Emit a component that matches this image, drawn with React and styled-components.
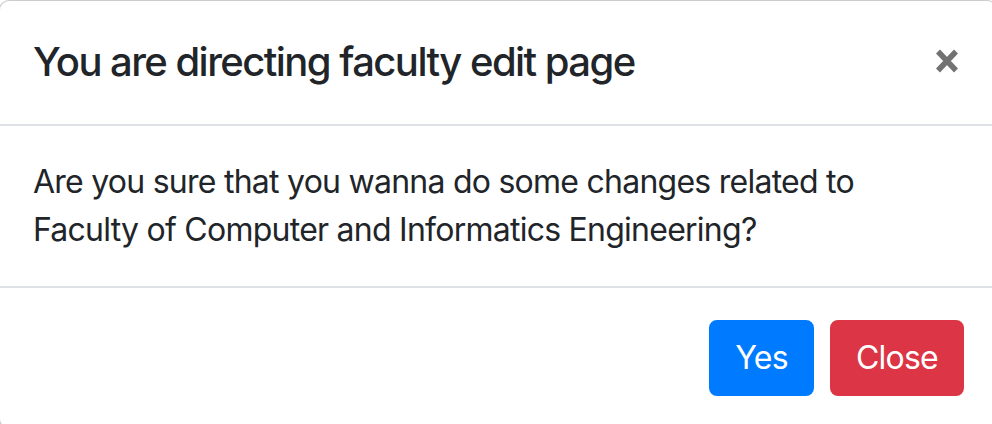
import styled, { createGlobalStyle } from 'styled-components'

const GlobalStyle = createGlobalStyle`
    html, body {
        margin: 0;
        padding: 0;
        background: #fff;
        overflow: hidden;
    }
    body {
        font-family: Inter, "Liberation Sans", Arial, sans-serif;
        color: #212529;
    }
`

export default function App() {
    return (
        <>
            <GlobalStyle />
            <Modal>
                <Header>
                    <Title>You are directing faculty edit page</Title>
                    <CloseX aria-label='Close'>
                        <svg width='24' height='26' viewBox='0 0 24 26'>
                            <path d='M3 3.5 L21 22.5 M21 3.5 L3 22.5' stroke='#000' strokeWidth='5.5' strokeLinecap='butt' />
                        </svg>
                    </CloseX>
                </Header>
                <Body>
                    Are you sure that you wanna do some changes related to<br />
                    Faculty of Computer and Informatics Engineering?
                </Body>
                <Footer>
                    <Button variant='primary'>Yes</Button>
                    <Button variant='danger'>Close</Button>
                </Footer>
            </Modal>
        </>
    )
}

const Modal = styled.div`
    box-sizing: border-box;
    width: 998px;
    margin-left: -1px;
    background-color: #fff;
    border: 1px solid rgba(0, 0, 0, 0.2);
    border-radius: 10px;
    display: flex;
    flex-direction: column;
`
const Header = styled.div`
    display: flex;
    align-items: flex-start;
    justify-content: space-between;
    padding: 31px 32px 32px 33px;
    border-bottom: 2px solid #dee2e6;
`
const Title = styled.h5`
    margin: 0;
    font-size: 40px;
    line-height: 60px;
    font-weight: 500;
    letter-spacing: -1.55px;
    color: #212529;
`
const CloseX = styled.button`
    border: 0;
    background: transparent;
    padding: 0;
    margin: 16px 5px 0 auto;
    opacity: 0.55;
    display: flex;
    cursor: pointer;
`
const Body = styled.div`
    padding: 32px 32px 32px 33px;
    font-size: 32px;
    line-height: 48px;
    font-weight: 400;
    letter-spacing: -0.75px;
    border-bottom: 2px solid #dee2e6;
`
const Footer = styled.div`
    display: flex;
    justify-content: flex-end;
    align-items: center;
    gap: 16px;
    padding: 32px;
`
const Button = styled.button`
    box-sizing: border-box;
    height: 76px;
    padding: 0 24px;
    font-family: inherit;
    font-size: 32px;
    font-weight: 400;
    line-height: 48px;
    letter-spacing: -0.75px;
    color: #fff;
    border: 2px solid ${props => props.variant === 'danger' ? '#dc3545' : '#007bff'};
    background-color: ${props => props.variant === 'danger' ? '#dc3545' : '#007bff'};
    border-radius: 8px;
`
